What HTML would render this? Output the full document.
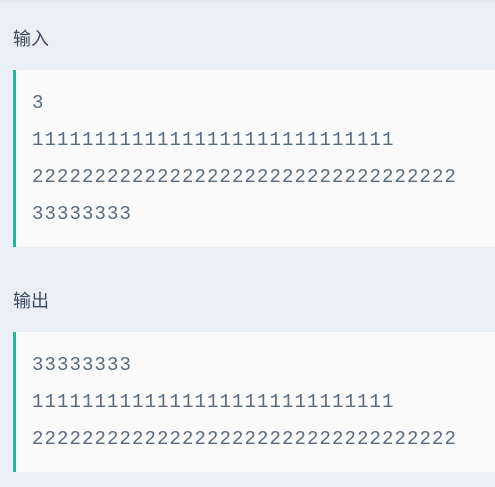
<!DOCTYPE html>
<html><head><meta charset="utf-8"><style>
html,body{margin:0;padding:0;width:495px;height:487px;background:#eaeff7;overflow:hidden}
.top{position:absolute;left:0;top:0;width:495px;height:3px;background:#e3e8f0}
.h{position:absolute;left:13px;font:18px "Liberation Sans","Noto Sans CJK SC",sans-serif;color:#3b4a5c}
.blk{position:absolute;left:13px;width:482px;background:#fafafa;border-left:3px solid #1fb89a;box-sizing:border-box}
.l{position:absolute;left:16px;font:19px "Liberation Mono",monospace;letter-spacing:1.1px;color:#5a6b80;white-space:pre;line-height:22px}
</style></head><body>
<div class="top"></div>
<div class="h" style="top:25px">输入</div>
<div class="blk" style="top:70px;height:177px">
<div class="l" style="top:22px">3</div>
<div class="l" style="top:59px">11111111111111111111111111111</div>
<div class="l" style="top:96px">2222222222222222222222222222222222</div>
<div class="l" style="top:133px">33333333</div>
</div>
<div class="h" style="top:287px">输出</div>
<div class="blk" style="top:332px;height:140px">
<div class="l" style="top:22px">33333333</div>
<div class="l" style="top:59px">11111111111111111111111111111</div>
<div class="l" style="top:96px">2222222222222222222222222222222222</div>
</div>
</body></html>
